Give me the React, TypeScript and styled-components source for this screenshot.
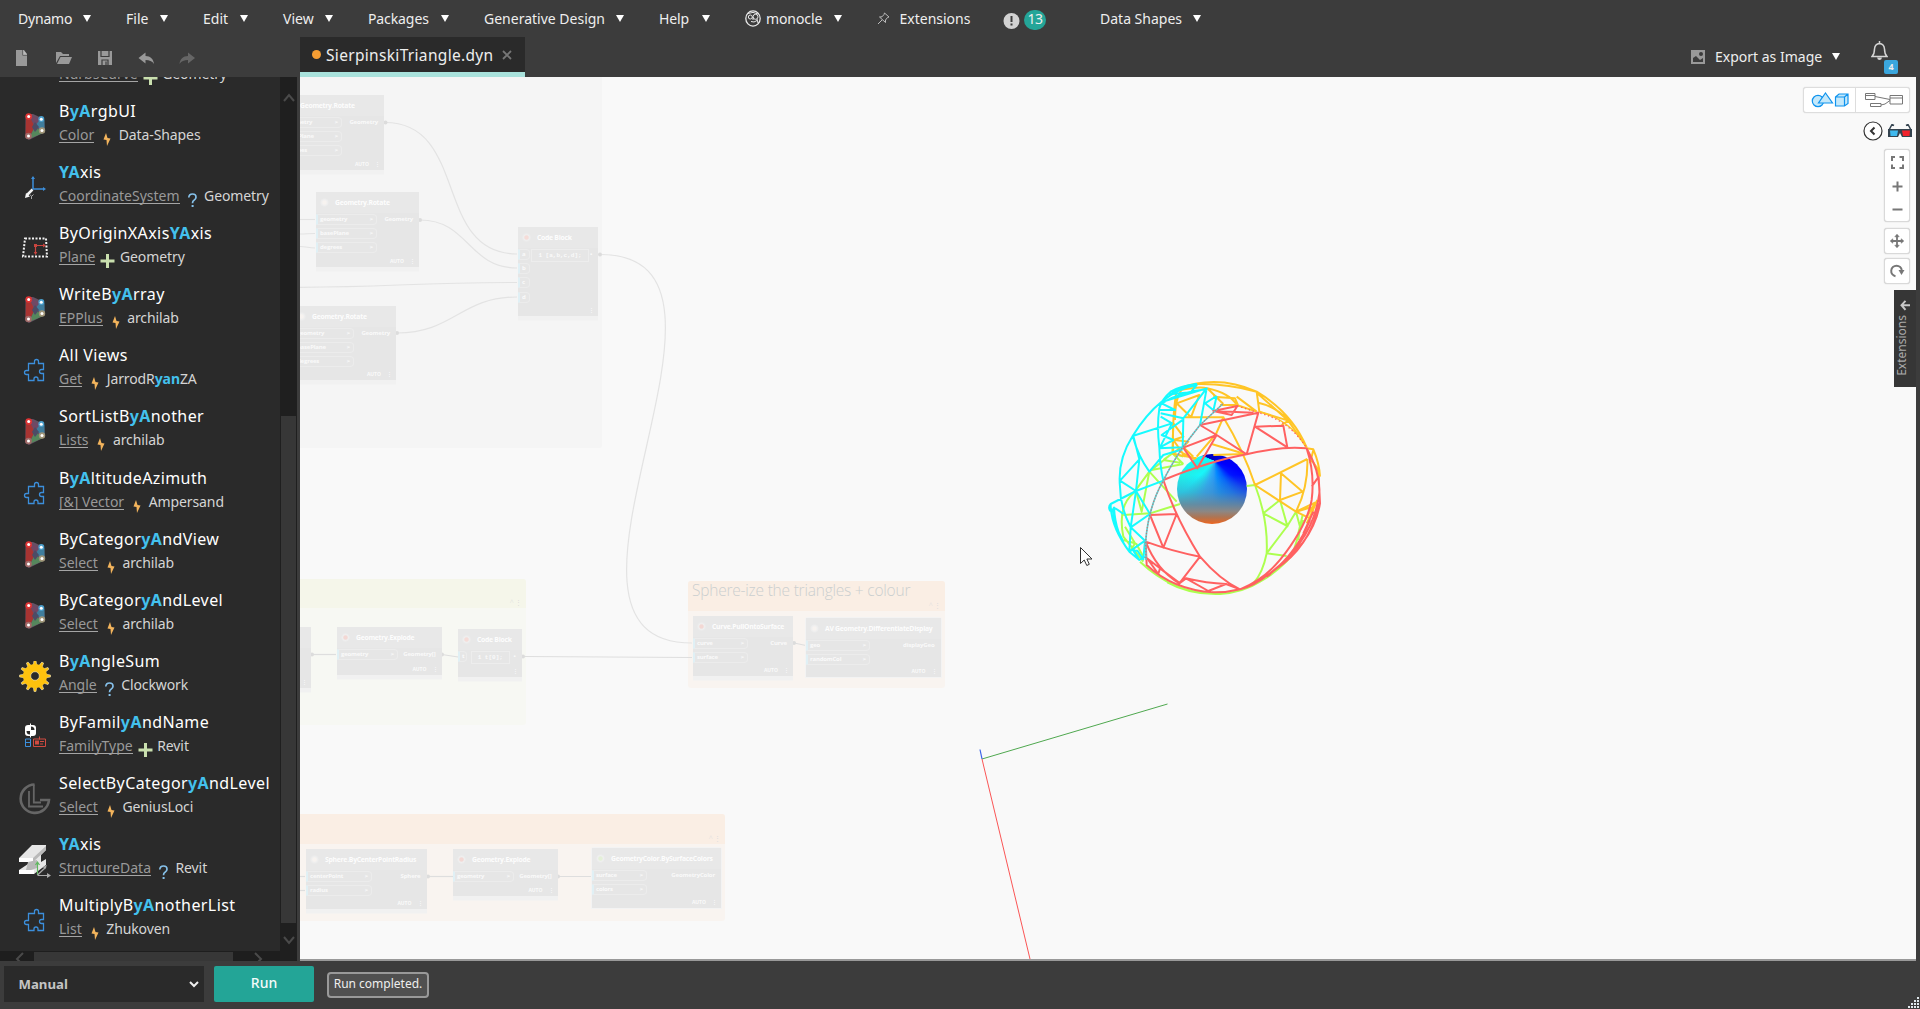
import React from 'react';
import styled, { createGlobalStyle } from 'styled-components';

const Global = createGlobalStyle`
  * { box-sizing: border-box; }
  body { margin: 0; background: #3c3c3c; overflow: hidden; }
  svg { display: block; flex: none; }
`;

const Shell = styled.div`
  width: 1920px;
  height: 1009px;
  display: flex;
  flex-direction: column;
  background: #3c3c3c;
  color: #eee;
  font-family: 'Noto Sans', 'Open Sans', sans-serif;
  overflow: hidden;
`;

/* ---------- header ---------- */
const MenuBar = styled.div`
  display: flex;
  height: 37px;
  padding-left: 18px;
`;
const MenuItem = styled.div<{ $w: number }>`
  width: ${p => p.$w}px;
  height: 37px;
  display: flex;
  align-items: center;
  font-size: 14px;
  line-height: 37px;
  padding-right: 35.5px;
  white-space: nowrap;
`;
const MenuText = styled.span<{ $ls?: number }>`
  letter-spacing: ${p => p.$ls ?? 0}px;
`;
const Caret = styled.i`
  margin-left: auto;
  border: 4.5px solid transparent;
  border-top: 7px solid #fff;
  border-bottom: 0;
  flex: none;
`;
const IconSlot = styled.span<{ $w: number }>`
  width: ${p => p.$w}px;
  flex: none;
`;
const Warning = styled.svg`
  margin-top: 3px;
`;
const CountBadge = styled.span`
  width: 22px;
  height: 20px;
  margin: 2px 0 0 4px;
  border-radius: 11px;
  background: #24a598;
  font-size: 14px;
  line-height: 18px;
  text-align: center;
  letter-spacing: -0.6px;
`;
const ToolRow = styled.div`
  display: flex;
  height: 40px;
`;
const Tools = styled.div`
  width: 300px;
  padding-left: 13px;
  display: flex;
  align-items: center;
  gap: 21px;
  padding-top: 2px;
`;
const Tab = styled.div`
  width: 225px;
  height: 40px;
  background: #2a2a2a;
  border-bottom: 5px solid #a9e2dc;
  display: flex;
  align-items: center;
  padding-left: 12px;
  font-size: 15.5px;
  white-space: nowrap;
`;
const Dot = styled.i`
  width: 9px;
  height: 9px;
  border-radius: 50%;
  background: #f59d33;
  margin-right: 5px;
`;
const TabName = styled.span`
  width: 176px;
  letter-spacing: 0.32px;
`;
const HeaderRight = styled.div`
  margin-left: auto;
  width: 229px;
  display: flex;
`;
const Export = styled.div`
  width: 180px;
  display: flex;
  align-items: center;
  font-size: 14px;
  padding: 0 31px 1px 0;
`;
const BellWrap = styled.div`
  position: relative;
  padding-top: 4px;
`;
const BellCount = styled.span`
  position: absolute;
  left: 13px;
  top: 23px;
  width: 14px;
  height: 14px;
  border-radius: 2px;
  background: #3aa6dd;
  font: bold 9px/14px 'Noto Sans', sans-serif;
  text-align: center;
`;

/* ---------- sidebar ---------- */
const Main = styled.div`
  display: flex;
  height: 884px;
`;
const Sidebar = styled.div`
  width: 297px;
  display: grid;
  grid-template: 874px 10px / 280px 17px;
  background: #1f1f1f;
`;
const List = styled.div`
  background: #2a2a2a;
  overflow: hidden;
`;
const ListInner = styled.div`
  margin-top: -38px;
`;
const VTrack = styled.div`
  display: flex;
  flex-direction: column;
  align-items: center;
  padding-top: 15px;
  height: 884px;
`;
const VThumb = styled.div`
  margin: 312px 0 11px;
  width: 15px;
  height: 507px;
  background: #373737;
`;
const HTrack = styled.div`
  display: flex;
  background: #1e1e1e;
  padding: 1px 0 0 15px;
  overflow: hidden;
`;
const HThumb = styled.div`
  margin: 0 20px 0 7px;
  width: 199px;
  background: #373737;
`;
const Gutter = styled.div`
  width: 3px;
`;
const Item = styled.div`
  height: 61.08px;
  display: flex;
`;
const ItemIcon = styled.div`
  width: 59px;
  padding: 11px 0 0 19px;
  flex: none;
`;
const ItemTitle = styled.div`
  height: 23px;
  font-size: 16px;
  line-height: 23px;
  color: #fff;
  white-space: nowrap;
  letter-spacing: 0.4px;
`;
const Hit = styled.b`
  color: #43c1ee;
`;
const SubLine = styled.div`
  height: 22px;
  display: flex;
  font-size: 14px;
  line-height: 22px;
  color: #d5d5d5;
  white-space: nowrap;
  padding-top: 1px;
`;
const Cat = styled.span`
  color: #999;
  height: 19px;
  border-bottom: 1px solid #a5a5a5;
  line-height: 22px;
`;
const Kind = styled.span`
  width: 24.5px;
  padding: 8px 0 0 5px;
`;
const Author = styled.span`
  letter-spacing: -0.1px;
`;

/* ---------- workspace ---------- */
const Canvas = styled.div`
  position: relative;
  width: 1616px;
  height: 884px;
  background: #f9f9f9;
  border-bottom: 2px solid #999;
  overflow: hidden;
`;
const Layer = styled.svg`
  position: absolute;
  left: 0;
  top: 0;
`;
const Group = styled.div<{ $x: number; $y: number; $w: number; $h: number; $c: string }>`
  position: absolute;
  left: ${p => p.$x - 300}px;
  top: ${p => p.$y - 77}px;
  width: ${p => p.$w}px;
  height: ${p => p.$h}px;
  background: ${p => p.$c};
  border-radius: 3px;
  overflow: hidden;
`;
const GroupHead = styled.div<{ $c: string; $h: number }>`
  height: ${p => p.$h}px;
  background: ${p => p.$c};
  padding: 0 4px;
  display: flex;
  justify-content: space-between;
  font-family: 'Open Sans', sans-serif;
  font-weight: 300;
  font-size: 15.5px;
  letter-spacing: -0.22px;
  line-height: 19px;
  color: #cbcfcf;
  white-space: nowrap;
`;
const GroupMark = styled.small`
  margin-left: auto;
  align-self: flex-end;
  font-size: 7px;
  line-height: 10px;
  color: #ddd;
`;
const NodeBox = styled.div<{ $x: number; $y: number; $w: number; $h: number; $strip?: boolean }>`
  position: absolute;
  left: ${p => p.$x - 300}px;
  top: ${p => p.$y - 77}px;
  width: ${p => p.$w}px;
  height: ${p => p.$h}px;
  background: #e6e6e6;
  border-radius: 2px 2px 0 0;
  box-shadow: ${p => (p.$strip ? '0 4.5px 0 #f1f1f1' : '0 0 0 1px #f3f3f3')};
  display: flex;
  flex-direction: column;
  color: #fafafa;
  font: bold 6px/11px 'Open Sans', sans-serif;
  white-space: nowrap;
`;
const NodeHead = styled.div`
  height: 21px;
  flex: none;
  display: flex;
  align-items: center;
  gap: 6px;
  padding-left: 4px;
  background: #e8e8e8;
  font-size: 6.8px;
  letter-spacing: -0.25px;
  color: #fdfdfd;
`;
const Glyph = styled.i<{ $c: string }>`
  width: 9px;
  height: 9px;
  border-radius: 50%;
  background: radial-gradient(${p => p.$c} 25%, #efefef 45%, #e8e8e8 75%);
  flex: none;
`;
const Ports = styled.div`
  display: flex;
  justify-content: space-between;
  padding-top: 1px;
`;
const PortCol = styled.div`
  display: flex;
  flex-direction: column;
  gap: 3.2px;
`;
const InPort = styled.div<{ $w: number }>`
  width: ${p => p.$w}px;
  height: 11px;
  border: 1px solid #ececec;
  border-left: 2px solid #e0f0f5;
  border-radius: 0 4px 4px 0;
  padding: 0 3px 0 2px;
  display: flex;
  justify-content: space-between;
  line-height: 9px;
  letter-spacing: -0.2px;
`;
const OutPort = styled.div`
  padding-right: 6px;
  letter-spacing: -0.15px;
`;
const CodeBox = styled.div`
  height: 13px;
  border: 1px solid #ededed;
  padding: 0 6px;
  font: bold 6px/11px 'Liberation Mono', monospace;
`;
const NodeFoot = styled.div`
  margin-top: auto;
  padding-right: 4px;
  display: flex;
  justify-content: flex-end;
  gap: 6px;
  font-size: 5px;
`;
const Ball = styled.div`
  position: absolute;
  left: 877px;
  top: 377px;
  width: 70px;
  height: 70px;
  border-radius: 50%;
  background:
    linear-gradient(to bottom, rgba(110, 130, 150, 0) 30%, rgba(70, 140, 190, 0.5) 55%, rgba(105, 135, 155, 0.9) 72%, #8c8784 82%, #ad7554 90%, #ee661f 100%),
    conic-gradient(from 0deg at 54% 10%, #0000c8 0deg, #0000e0 60deg, #0000ff 110deg, #0014ff 130deg, #0060ff 152deg, #058aff 172deg, #2a9cf5 184deg, #2fb0f5 198deg, #22ddee 214deg, #18f6fa 226deg, #20f0e8 245deg, #10ffff 285deg, #10d8ff 292deg, #0000c0 296deg, #0000c8 360deg);
`;
const Overlay = styled.div`
  position: absolute;
  right: 0;
  top: 10px;
  display: flex;
  flex-direction: column;
  align-items: flex-end;
`;
const Toggle = styled.div`
  display: flex;
  width: 107px;
  height: 26px;
  margin-right: 6px;
  background: #fff;
  border: 1px solid #ddd;
  border-radius: 3px;
  box-shadow: 0 0 1px #ccc;
`;
const Half = styled.div<{ $first?: boolean }>`
  flex: 1;
  border-right: ${p => (p.$first ? '1px solid #ddd' : '0')};
  padding-left: ${p => (p.$first ? 0 : 2)}px;
  display: flex;
  align-items: center;
  justify-content: center;
`;
const GlassesRow = styled.div`
  display: flex;
  align-items: center;
  gap: 5px;
  margin: 8px 4px 8px 0;
`;
const Tile = styled.div<{ $h: number; $mb: number }>`
  width: 26px;
  height: ${p => p.$h}px;
  margin: 0 6px ${p => p.$mb}px 0;
  background: #fff;
  border: 1px solid #d9d9d9;
  border-radius: 3px;
  box-shadow: 0 0 1px #bbb;
  display: flex;
  flex-direction: column;
  align-items: center;
  justify-content: center;
`;
const ExtTab = styled.div`
  width: 22px;
  height: 97px;
  background: #363636;
  display: flex;
  flex-direction: column;
  align-items: center;
  padding: 10px 0 0 0;
`;
const ExtText = styled.span`
  writing-mode: vertical-rl;
  transform: rotate(180deg);
  font-size: 12px;
  line-height: 16px;
  color: #aaa;
  margin: 4px 6px 0 0;
`;

/* ---------- footer ---------- */
const Footer = styled.div`
  height: 48px;
  display: flex;
  padding: 5px 0 0 4px;
  position: relative;
`;
const ModeSelect = styled.div`
  width: 200px;
  height: 36px;
  background: #2a2a2a;
  padding: 0 4px 0 14.5px;
  display: flex;
  align-items: center;
  justify-content: space-between;
  font-weight: bold;
  font-size: 13.2px;
  color: #c4c4c4;
`;
const RunButton = styled.div`
  margin-left: 10px;
  width: 100px;
  height: 36px;
  border-radius: 2px;
  background: #23a597;
  color: #f2fbfa;
  font-size: 14px;
  font-weight: 500;
  line-height: 34px;
  text-align: center;
`;
const Status = styled.div`
  margin: 6px 0 0 13px;
  width: 102px;
  height: 26px;
  border: 2px solid #999;
  border-radius: 4px;
  background: #505050;
  font-size: 12px;
  line-height: 20px;
  text-align: center;
  white-space: nowrap;
`;
const Grip = styled.svg`
  position: absolute;
  right: 1px;
  bottom: 1px;
`;

/* ---------- icons ---------- */
const CrystalIcon = () => (
  <svg width="32" height="32" viewBox="0 0 32 32">
    <path d="M9.500 3 L14 3 L25 8 L26 21 L10 29 L6.500 27 L6.500 5Z" fill="#655064" />
    <path d="M7 4 L10 4 L16 16 L9 28 L6.500 26Z" fill="#a83432" />
    <path d="M10 4 L22 9 L16 16Z" fill="#704864" />
    <path d="M22 7 L25.500 9 L25.500 20 L16 15Z" fill="#3f7d9c" />
    <path d="M16 15 L24 22 L10 28Z" fill="#55875c" />
    <path d="M16 11 L20 16 L16 21 L13 16Z" fill="#4c4c66" />
    <circle cx="9.700" cy="5.500" r="3.300" fill="#e03434" /><circle cx="22.300" cy="8" r="3" fill="#4b9fcc" />
    <circle cx="23" cy="19.500" r="3.200" fill="#a09578" /><circle cx="9.500" cy="25" r="3.300" fill="#a06a68" />
    <g fill="#fff"><circle cx="9.700" cy="5.500" r="1.500" /><circle cx="22.300" cy="8.300" r="1.500" /><circle cx="23" cy="19.500" r="1.500" /><circle cx="9.500" cy="25" r="1.500" /></g>
  </svg>
);
const AxisIcon = () => (
  <svg width="32" height="32" viewBox="0 0 32 32" fill="none">
    <path d="M14 5V17H25" stroke="#3c8fdc" strokeWidth="1.500" />
    <path d="M12 7L14 4L16 7ZM24 15L27 17L24 19Z" fill="#3c8fdc" />
    <path d="M13.500 17.500L8 23" stroke="#f4f4f4" strokeWidth="2.500" />
    <path d="M6 26L7 21L11 24.500Z" fill="#f4f4f4" />
    <path d="M11 22.500L12.500 24.500L14.500 22.500M12.500 24.500V27" stroke="#aaa" />
  </svg>
);
const PlaneIcon = () => (
  <svg width="32" height="32" viewBox="0 0 32 32" fill="none">
    <path d="M6 5.500H27L28 23.500H4Z" stroke="#f2f2f2" strokeWidth="2" strokeDasharray="2 1.500" />
    <path d="M16.500 20V12.500H26" stroke="#c8453f" strokeWidth="1.200" />
    <path d="M15 11h3v3h-3zM24 10.500L27 12.500L24 14.500ZM14.700 19h3.600L16.500 22Z" fill="#c8453f" />
  </svg>
);
const PuzzleIcon = () => (
  <svg width="32" height="32" viewBox="0 1 32 32" fill="none" stroke="#3c8fdc" strokeWidth="1.300">
    <path d="M9.500 9.500H15.500V7.500A2 2 0 1 1 19.500 7.500V9.500H24.500V15.500H22.500A2 2 0 1 0 22.500 19.500H24.500V26.500H19V25A2 2 0 1 0 15 25V26.500H9.500V20.500H7.500A2 2 0 1 1 7.500 16.500H9.500Z" />
  </svg>
);
const GearIcon = () => (
  <svg width="32" height="32" viewBox="0 1 32 32">
    <g fill="#fec20e" stroke="#fff3c8" strokeWidth=".5">
      {Array.from({ length: 12 }, (_, i) => (
        <path key={i} d="M14 6L15 .5H17L18 6Z" transform={`rotate(${i * 30} 16 16)`} />
      ))}
    </g>
    <circle cx="16" cy="16" r="12" fill="#fec20e" />
    <circle cx="16" cy="16" r="4.300" fill="#2a2a2a" stroke="#fff0c0" strokeWidth=".6" />
  </svg>
);
const FamilyIcon = () => (
  <svg width="32" height="32" viewBox="0 0 32 32" fill="none">
    <rect x="6" y="3" width="11" height="11" rx="3" fill="#fff" />
    <path d="M12 4.500V8H15.500A3.500 3.500 0 0 0 12 4.500ZM11 9V12.500A3.500 3.500 0 0 1 7.500 9Z" fill="#2a2a2a" />
    <path d="M11.500 1.500V15.500" stroke="#fff" />
    <path d="M6.500 17h5v7.500h-5zM6.500 20.500h5" stroke="#3c8fdc" />
    <path d="M14.500 17h12v7.500h-12zM20.500 14.500v3M21 19.500h4M21 22h3" stroke="#d04a40" />
    <path d="M16 18.500h4v4h-4z" fill="#d04a40" />
  </svg>
);
const GeniusIcon = () => (
  <svg width="32" height="32" viewBox="0 0 32 32" fill="none" stroke="#666" strokeWidth="2.600">
    <path d="M15.500 1.500A14.200 14.200 0 1 0 30 17H21" />
    <path d="M14.800 1.500V19.500H22M10 8V23.500H24" strokeWidth="1.800" />
  </svg>
);
const BeamIcon = () => (
  <svg width="34" height="36" viewBox="0 0 34 36">
    <path d="M0 14L13 1H27V6L22 11V18L27 15V21L15 30H0V26L9 20V17H0Z" fill="#e6e6e6" />
    <path d="M0 14H14V18H0ZM0 26H15V30H0Z" fill="#fff" />
    <path d="M14 14L27 2V6L14 18ZM9 18L18 16V24L12 26H7Z" fill="#b8b8b8" />
    <path d="M18.500 31V19M16.500 21L18.500 18L20.500 21" stroke="#5fb85f" fill="none" strokeWidth="1.200" />
    <path d="M18.500 31.500H29M18.500 31L27 23" stroke="#aaa" fill="none" strokeWidth="1.200" />
    <path d="M28 29L32 31.500L28 34ZM24 23L28 21L26 25.500Z" fill="#aaa" />
  </svg>
);
const icons: Record<string, () => React.ReactElement> = {
  crystal: CrystalIcon, axis: AxisIcon, plane: PlaneIcon, puzzle: PuzzleIcon,
  gear: GearIcon, family: FamilyIcon, genius: GeniusIcon, beam: BeamIcon,
};

const KindIcon = ({ k }: { k: string }) => (
  <svg width="15" height="15" viewBox="0 0 15 15">
    {k === 'plus' && <path d="M6 0h3v5.500H14.500v3H9V14H6V8.500H.5v-3H6z" fill="#c9dfae" />}
    {k === 'bolt' && <path d="M7 1L4.500 7.500L7.500 8L8 14L11.500 6.500L8.500 6Z" fill="#f3b45c" />}
    {k === 'query' && (
      <g>
        <path d="M3.800 4.500Q4 1 7.500 1T11 4.200Q11 6 9 7.200Q7.500 8 7.500 10.300" fill="none" stroke="#86c1ea" strokeWidth="1.700" />
        <path d="M6.600 12h2v2h-2z" fill="#86c1ea" />
      </g>
    )}
  </svg>
);

/* Text between asterisks is the part that matches the search. */
const Marked = ({ t }: { t: string }) => (
  <>{t.split('*').map((s, i) => (i % 2 ? <Hit key={i}>{s}</Hit> : s))}</>
);

type Row = [icon: string, title: string, cat: string, kind: string, author: string];
const rows: Row[] = [
  ['', '', 'NurbsCurve', 'plus', 'Geometry'],
  ['crystal', 'B*yA*rgbUI', 'Color', 'bolt', 'Data-Shapes'],
  ['axis', '*YA*xis', 'CoordinateSystem', 'query', 'Geometry'],
  ['plane', 'ByOriginXAxis*YA*xis', 'Plane', 'plus', 'Geometry'],
  ['crystal', 'WriteB*yA*rray', 'EPPlus', 'bolt', 'archilab'],
  ['puzzle', 'All Views', 'Get', 'bolt', 'JarrodR*yan*ZA'],
  ['crystal', 'SortListB*yA*nother', 'Lists', 'bolt', 'archilab'],
  ['puzzle', 'B*yA*ltitudeAzimuth', '[&] Vector', 'bolt', 'Ampersand'],
  ['crystal', 'ByCategor*yA*ndView', 'Select', 'bolt', 'archilab'],
  ['crystal', 'ByCategor*yA*ndLevel', 'Select', 'bolt', 'archilab'],
  ['gear', 'B*yA*ngleSum', 'Angle', 'query', 'Clockwork'],
  ['family', 'ByFamil*yA*ndName', 'FamilyType', 'plus', 'Revit'],
  ['genius', 'SelectByCategor*yA*ndLevel', 'Select', 'bolt', 'GeniusLoci'],
  ['beam', '*YA*xis', 'StructureData', 'query', 'Revit'],
  ['puzzle', 'MultiplyB*yA*notherList', 'List', 'bolt', 'Zhukoven'],
];

const Chevron = ({ d, s = '#4a4a4a' }: { d: string; s?: string }) => (
  <svg width="12" height="12" viewBox="0 0 12 12" fill="none" stroke={s} strokeWidth="2"><path d={d} /></svg>
);

/* ---------- graph nodes ---------- */
type NodeProps = {
  x: number; y: number; w: number; h: number; title: string; ins: string[]; out?: string;
  pw?: number; code?: string; auto?: boolean; strip?: boolean; tint?: string;
};
const GraphNode = ({ x, y, w, h, title, ins, out, pw = 61, code, auto = true, strip = true, tint = '#f7f3f0' }: NodeProps) => (
  <NodeBox $x={x} $y={y} $w={w} $h={h} $strip={strip}>
    <NodeHead><Glyph $c={tint} />{title}</NodeHead>
    <Ports>
      <PortCol>
        {ins.map(p => <InPort key={p} $w={pw}>{p}{pw > 20 && <span>&gt;</span>}</InPort>)}
      </PortCol>
      {code && <CodeBox>{code}</CodeBox>}
      <OutPort>{out}</OutPort>
    </Ports>
    <NodeFoot>{auto && <span>AUTO</span>}<span>⋮</span></NodeFoot>
  </NodeBox>
);

const wire = (x1: number, y1: number, x2: number, y2: number) => {
  const o = Math.hypot(x2 - x1, y2 - y1) * 0.45;
  return `M${x1} ${y1}C${x1 + o} ${y1} ${x2 - o} ${y2} ${x2} ${y2}`;
};
const wires: [number, number, number, number][] = [
  [385, 122.5, 517, 254], [420, 220, 517, 268], [280, 287.5, 517, 282.5], [397, 333, 517, 297],
  [600, 254.5, 692, 643], [300, 219.5, 315, 219.5], [300, 234, 315, 233.5], [300, 246.5, 315, 248],
];
const links: [number, number, number, number][] = [
  [312, 654.5, 336, 654.5], [442, 654.5, 458, 657], [523, 656.5, 692, 657.5], [794, 643, 806, 645.5],
  [428, 876.5, 453, 876.5], [558, 876.5, 592, 876.5], [300, 876.5, 305, 876.5], [300, 890.5, 305, 890.5],
];

/* ---------- curved Sierpinski wireframe ---------- */
const cyan = `M350 72Q238 98 158 228Q112 300 120 380Q120 440 152 502M350 72Q300 78 272 95Q245 118 238 145Q230 200 238 262Q240 320 250 362
M272 95L350 75L332 97L270 103L315 85M250 125L380 85L310 175L242 160M380 85L372 130L360 195M382 88Q310 92 245 130L285 150L240 150M410 108L375 130L402 152M410 108L400 152
M158 228L276 190L240 262L280 240L245 225L310 178L308 262L236 265M276 190L242 170M158 228Q175 290 208 335L250 285L308 268M178 298L120 362L168 393L178 298L160 228
M250 362L168 393L92 432Q84 440 90 452L102 448Q95 435 130 462M168 393L210 462L152 502L168 393M152 502L195 542L148 575L152 502M92 432Q92 500 148 575L178 600L195 590M102 440Q105 520 148 575M98 445L108 500L130 545M195 542L190 598L172 572L160 572L178 600`;
const orange = `M290 88Q410 41 530 95Q636 158 680 262M350 72Q440 70 530 95M300 90Q360 78 382 85Q450 100 470 135M290 90Q275 180 280 282L350 295M310 82Q285 110 285 180
M358 105L333 172L290 130ZM315 172L430 172L408 222L350 290M430 172Q490 270 525 375M395 252L495 282L400 285M530 95L538 155L625 182L530 98M535 128Q590 140 625 182L605 195M610 160L680 262M420 135L470 135L530 155M382 85L430 132M470 110L530 155M400 110L465 115L475 138
M280 190L310 230L280 240M310 262L340 290M285 240L325 245L308 262M280 282L300 262M300 275L345 298M280 240L315 290
M525 375L682 297M603 340L600 420L668 395ZM525 375L648 455M682 297Q685 380 648 455L705 428L690 475L648 455L700 440M680 265L700 268Q718 310 720 350M688 295Q715 320 718 350M690 310L700 270M705 428L675 480M700 450L680 490M712 420L690 470`;
const green = `M500 378L525 375Q565 480 560 580Q548 640 520 670M550 460L600 420L622 498ZM560 580L622 498M560 580L620 588M648 455L622 498L625 500M648 455L660 500L655 540M668 465L655 520M670 480L640 575
M180 605Q280 699 400 701M262 667Q330 705 420 702Q490 697 540 665Q620 620 660 550M280 190L277 280L208 335L160 400Q112 440 130 530L190 605M130 465L210 460L300 432M208 335L185 455L168 393M208 335L290 425M215 330L310 312M250 300L300 308M277 280L310 312M250 300L277 280L310 290M135 500L165 550L130 540M165 550L150 575M168 550L190 590`;
const red = `M250 360Q400 300 500 283Q600 258 680 265Q722 340 718 400Q700 540 570 640Q520 680 480 688M680 265Q705 340 695 420Q680 500 600 600Q550 660 480 688M716 350L720 430Q700 550 570 640M716 350L695 380M700 455L670 520M718 430Q690 560 590 625M690 480Q650 580 560 650
M250 360Q285 470 360 590Q420 660 480 688M210 465L290 462L250 563ZM197 545Q280 575 360 590L298 670Q230 630 197 545L200 615Q280 690 400 697Q440 698 480 688M318 655Q380 670 438 672L385 693ZM298 670L318 655M195 590L240 625L235 642L205 600M240 625L300 670M438 672L480 688
M310 263L410 225L352 325ZM410 225L500 283M360 195L535 158L500 283M360 195L410 225M400 153L472 138L455 165ZM525 200L610 197L622 262ZM400 153L520 158`;

export default function App() {
  return (
    <Shell>
      <Global />
      <MenuBar>
        <MenuItem $w={108}><MenuText $ls={-0.2}>Dynamo</MenuText><Caret /></MenuItem>
        <MenuItem $w={77}><MenuText>File</MenuText><Caret /></MenuItem>
        <MenuItem $w={80}><MenuText>Edit</MenuText><Caret /></MenuItem>
        <MenuItem $w={85}><MenuText>View</MenuText><Caret /></MenuItem>
        <MenuItem $w={116}><MenuText $ls={-0.1}>Packages</MenuText><Caret /></MenuItem>
        <MenuItem $w={175}><MenuText>Generative Design</MenuText><Caret /></MenuItem>
        <MenuItem $w={86}><MenuText $ls={-0.1}>Help</MenuText><Caret /></MenuItem>
        <MenuItem $w={132}>
          <IconSlot $w={21}>
            <svg width="16" height="17" viewBox="0 0 16 17" fill="none" stroke="#e8e8e8">
              <ellipse cx="8" cy="8.500" rx="7.200" ry="7.600" strokeWidth="1.300" />
              <circle cx="5.300" cy="7" r="2" /><circle cx="10.500" cy="6.800" r="2.500" /><path d="M3 3.500Q8 1 13 4M6 11.500Q9 13 12 10.500M8 7V10M12 9L13 13" />
            </svg>
          </IconSlot>
          <MenuText $ls={-0.1}>monocle</MenuText><Caret />
        </MenuItem>
        <MenuItem $w={126}>
          <IconSlot $w={22.5}>
            <svg width="13" height="13" viewBox="0 0 13 13" fill="none" stroke="#bbb">
              <path d="M7.500 1L12 5L10.500 5.500L8.500 8L8.500 10.500L2.500 5L5 4.800L7 2.500ZM5 8L1 12" />
            </svg>
          </IconSlot>
          <MenuText>Extensions</MenuText>
        </MenuItem>
        <MenuItem $w={97}>
          <Warning width="17" height="17" viewBox="0 0 17 17"><circle cx="8.500" cy="9" r="8" fill="#d2d2d2" /><path d="M7.500 4h2v6h-2zM7.500 11.500h2v2h-2z" fill="#3c3c3c" /></Warning>
          <CountBadge>13</CountBadge>
        </MenuItem>
        <MenuItem $w={136}><MenuText>Data Shapes</MenuText><Caret /></MenuItem>
      </MenuBar>
      <ToolRow>
        <Tools>
          <svg width="20" height="20" viewBox="0 0 20 20"><path d="M3 2h7v5h4v-1l-3-4h-1zM3 2h6.500v5.500H14V18H3z" fill="#999" /><path d="M10.500 2L14 6.500h-3.500z" fill="#bbb" /></svg>
          <svg width="20" height="20" viewBox="0 0 20 20"><path d="M2 15V4h5l2 2h6v2H6z" fill="#999" /><path d="M6.500 9H18l-3 7H3z" fill="#999" /></svg>
          <svg width="20" height="20" viewBox="0 0 20 20"><path d="M3 3h14v14H3z" fill="#999" /><path d="M6 3v5.500h8V3M7 17v-5h6v5M11 13.500V17" fill="none" stroke="#3c3c3c" strokeWidth="1.200" /></svg>
          <svg width="20" height="20" viewBox="-.5 -.5 20 20"><path d="M2 9.500L9 4v3.500c5 0 8 3 8.500 8C15.500 12.500 13 11.500 9 11.500V15z" fill="#999" /></svg>
          <svg width="20" height="20" viewBox="0 -.5 20 20"><path d="M18 9.500L11 4v3.500c-5 0-8 3-8.500 8C4.500 12.500 7 11.500 11 11.500V15z" fill="#666" /></svg>
        </Tools>
        <Tab>
          <Dot /><TabName>SierpinskiTriangle.dyn</TabName>
          <svg width="10" height="10" viewBox="0 0 10 10" stroke="#777" strokeWidth="1.800"><path d="M1 1L9 9M9 1L1 9" /></svg>
        </Tab>
        <HeaderRight>
          <Export>
            <IconSlot $w={24}>
              <svg width="14" height="14" viewBox="0 0 14 14"><path d="M0 0h14v14H0z" fill="#999" /><circle cx="10" cy="4" r="2" fill="#3c3c3c" /><path d="M2 12V8l3-2 4 4 3-2v4z" fill="#3c3c3c" /></svg>
            </IconSlot>
            <MenuText>Export as Image</MenuText><Caret />
          </Export>
          <BellWrap>
            <svg width="17" height="20" viewBox="0 0 17 20" fill="none" stroke="#d5d5d5" strokeWidth="1.500">
              <path d="M1 15.500Q3.500 13 3.500 8Q4 2.800 8.500 2.500Q13 2.800 13.500 8Q13.500 13 16 15.500Z" /><path d="M8.500 0v2.500" /><path d="M6 16.500h5q-.5 2.500-2.500 2.500T6 16.500Z" fill="#d5d5d5" stroke="none" />
            </svg>
            <BellCount>4</BellCount>
          </BellWrap>
        </HeaderRight>
      </ToolRow>
      <Main>
        <Sidebar>
          <List>
            <ListInner>
              {rows.map(([icon, title, cat, kind, author], i) => {
                const Icon = icons[icon];
                return (
                  <Item key={i}>
                    <ItemIcon>{Icon && <Icon />}</ItemIcon>
                    <div>
                      <ItemTitle><Marked t={title} /></ItemTitle>
                      <SubLine>
                        <Cat>{cat}</Cat><Kind><KindIcon k={kind} /></Kind><Author><Marked t={author} /></Author>
                      </SubLine>
                    </div>
                  </Item>
                );
              })}
            </ListInner>
          </List>
          <VTrack>
            <Chevron d="M1 9L6 3L11 9" /><VThumb /><Chevron d="M1 3L6 9L11 3" />
          </VTrack>
          <HTrack><Chevron d="M8 1L2 7L8 13" /><HThumb /><Chevron d="M2 1L8 7L2 13" /></HTrack>
        </Sidebar>
        <Gutter />
        <Canvas>
          <Group $x={290} $y={60} $w={312} $h={388} $c="#f5f5f5" />
          <Group $x={290} $y={579} $w={236} $h={145.5} $c="#f7f8f3"><GroupHead $c="#f5f6ea" $h={28.5}><GroupMark>^ ⋮</GroupMark></GroupHead></Group>
          <Group $x={688} $y={581} $w={257} $h={106.5} $c="#f9f4f0"><GroupHead $c="#faeee4" $h={30}>Sphere-ize the triangles + colour<GroupMark>^ ⋮</GroupMark></GroupHead></Group>
          <Group $x={290} $y={814} $w={435} $h={106.5} $c="#f9f4f0"><GroupHead $c="#faeee4" $h={30}><GroupMark>^ ⋮</GroupMark></GroupHead></Group>
          <Layer width="1616" height="882" viewBox="300 77 1616 882" fill="none">
            <g stroke="#e3e3e3" strokeWidth="1.200">{wires.map((w, i) => <path key={i} d={wire(...w)} />)}</g>
            <g stroke="#dedede" strokeWidth="1.200">{links.map(([a, b, c, d], i) => <path key={i} d={`M${a} ${b}L${c} ${d}`} />)}</g>
            <g fill="#dcdcdc">{[[385.5, 122.5], [420, 220], [397, 333], [600, 254.5], [312, 654.5], [442, 654.5], [523, 656.5], [794, 643], [428, 876.5], [558, 876.5]].map(([x, y]) => <circle key={x} cx={x} cy={y} r="2" />)}</g>
          </Layer>
          <GraphNode x={281} y={95} w={103} h={75} title="Geometry.Rotate" ins={['geometry', 'basePlane', 'degrees']} out="Geometry" />
          <GraphNode x={316} y={192} w={103} h={75} title="Geometry.Rotate" ins={['geometry', 'basePlane', 'degrees']} out="Geometry" />
          <GraphNode x={293} y={305.5} w={103} h={74.5} title="Geometry.Rotate" ins={['geometry', 'basePlane', 'degrees']} out="Geometry" />
          <GraphNode x={518} y={227} w={80} h={89} title="Code Block" ins={['a', 'b', 'c', 'd']} pw={12} code="1 [a,b,c,d];" out="▪" auto={false} tint="#f5dcd8" />
          <GraphNode x={250} y={627} w={61} h={61} title="" ins={[]} out="" auto={false} />
          <GraphNode x={337} y={626.5} w={104.5} h={48.5} title="Geometry.Explode" ins={['geometry']} out="Geometry[]" tint="#f3d8d4" />
          <GraphNode x={458} y={629} w={63.5} h={48} title="Code Block" ins={['t']} pw={9} code="1 t[0];" out="▪" auto={false} tint="#f5dcd8" />
          <GraphNode x={693} y={615.5} w={100} h={60.5} title="Curve.PullOntoSurface" ins={['curve', 'surface']} pw={55} out="Curve" tint="#f3d8d4" />
          <GraphNode x={806} y={618} w={134.5} h={59} title="AV Geometry.DifferentiateDisplay" ins={['geo', 'randomCol']} pw={64} out="displayGeo" strip={false} />
          <GraphNode x={306} y={849} w={120.5} h={60} title="Sphere.ByCenterPointRadius" ins={['centerPoint', 'radius']} pw={66} out="Sphere" />
          <GraphNode x={453} y={849} w={104.5} h={47} title="Geometry.Explode" ins={['geometry']} out="Geometry[]" tint="#f3d8d4" />
          <GraphNode x={592} y={848} w={129} h={60} title="GeometryColor.BySurfaceColors" ins={['surface', 'colors']} pw={55} out="GeometryColor" strip={false} tint="#e4f0d8" />
          <Ball />
          <Layer width="1616" height="882" viewBox="300 77 1616 882" fill="none">
            <path d="M982 759L1167.500 704" stroke="#4fa84f" />
            <path d="M982 759L1030 959" stroke="#fa5555" />
            <path d="M980 749.500L982 759" stroke="#3a62e8" strokeWidth="1.200" />
            <g transform="translate(1080 360) scale(.33333)" strokeWidth="6" strokeLinejoin="round">
              <path d={green} stroke="#adff4f" />
              <path d={orange} stroke="#ffc526" />
              <path d={cyan} stroke="#15fbff" />
              <path d={red} stroke="#ff6161" />
              <path d="M428 132L360 195L308 262Q270 320 250 362Q205 440 197 545L198 600" stroke="#5ed0d4" strokeWidth="5" />
              <path d="M428 132L360 195L308 262Q270 320 250 362Q205 440 197 545L198 600" stroke="#c07a78" strokeWidth="3.500" strokeDasharray="4 5" />
              <path d="M538 155Q630 180 680 262" stroke="#ffc526" strokeWidth="4" />
              <path d="M472 138L535 158Q630 182 680 265" stroke="#ff6161" strokeWidth="4" strokeDasharray="4 8" />
            </g>
            <path d="M1080.500 547.500V563.500L1084.200 560L1086.800 565.500L1089.300 564.300L1086.900 559H1092Z" fill="#fff" stroke="#333" />
          </Layer>
          <Overlay>
            <Toggle>
              <Half $first>
                <svg width="38" height="16" viewBox="0 0 38 16" fill="#c4e8fa" stroke="#0f93ee" strokeWidth="1.200">
                  <circle cx="7" cy="9" r="5.700" /><path d="M14.500 1L21.500 11H7.500Z" /><path d="M24.500 5L28 2H37V11.500L33.500 14H24.500ZM24.500 5H33.500V14M33.500 5L37 2" />
                </svg>
              </Half>
              <Half>
                <svg width="38" height="16" viewBox="0 0 38 16" fill="none" stroke="#777">
                  <path d="M.5 1.500h9.500v6H.5zM.5 3.500H10M5.500 11.500h10.500v3H5.500zM25 3.500h12.500v8.500H25zM25 6H37.500M10 4.500L25 7.500M16 13L20 12L25 8.500" />
                </svg>
              </Half>
            </Toggle>
            <GlassesRow>
              <svg width="20" height="20" viewBox="0 0 20 20" fill="none" stroke="#333"><circle cx="10" cy="10" r="9" fill="#fff" strokeWidth="1.200" /><path d="M11.500 6.500L8 10L11.500 13.500" strokeWidth="2" /></svg>
              <svg width="24" height="14" viewBox="0 0 24 14"><path d="M1 6L4 .5L6 1.500M23 6L20 .5L18 1.500" fill="none" stroke="#34434f" strokeWidth="1.500" /><path d="M0 5h24v8H14l-2-4-2 4H0z" fill="#34434f" /><path d="M2 6.500h8L9 12H2.500z" fill="#3fb9ee" /><path d="M14 6.500h8L21.500 12H15z" fill="#f2222c" /></svg>
            </GlassesRow>
            <Tile $h={73} $mb={6}>
              <svg width="16" height="64" viewBox="0 0 16 64" fill="none" stroke="#777" strokeWidth="2">
                <path d="M3 7V3H6M10.500 3H14V7M14 10.500V14H10.500M6 14H3V10.500" /><path d="M8.500 27.500V37.500M3.500 32.500H13.500M3.500 55.500H13.500" />
              </svg>
            </Tile>
            <Tile $h={26} $mb={4}>
              <svg width="16" height="16" viewBox="0 0 16 16" fill="#777" stroke="#777"><path d="M8 2V14M2 8H14" strokeWidth="1.800" /><path d="M8 1.200L10.200 3.800H5.800ZM8 14.800L10.200 12.200H5.800ZM1.200 8L3.800 5.800V10.200ZM14.800 8L12.200 5.800V10.200Z" strokeWidth=".6" /></svg>
            </Tile>
            <Tile $h={26} $mb={6}>
              <svg width="16" height="16" viewBox="0 0 16 16"><path d="M6.500 13.200A5.300 5.300 0 1 1 12.800 7.500" fill="none" stroke="#777" strokeWidth="2" /><path d="M9.500 7H15.500L12.500 12Z" fill="#777" /></svg>
            </Tile>
            <ExtTab>
              <svg width="10" height="11" viewBox="0 0 10 11" fill="none" stroke="#c8c8c8" strokeWidth="2"><path d="M5.500 .8L1.500 5.200L5.500 9.800M1.500 5.200H10" /></svg>
              <ExtText>Extensions</ExtText>
            </ExtTab>
          </Overlay>
        </Canvas>
      </Main>
      <Footer>
        <ModeSelect>Manual<Chevron d="M2 4L6 8L10 4" s="#eee" /></ModeSelect>
        <RunButton>Run</RunButton>
        <Status>Run completed.</Status>
        <Grip width="12" height="12" viewBox="0 0 12 12" fill="#dfe8ec">
          {[[10, 1], [7, 4], [10, 4], [4, 7], [7, 7], [10, 7], [1, 10], [4, 10], [7, 10], [10, 10]].map(([x, y]) => <rect key={`${x}-${y}`} x={x} y={y} width="2" height="2" />)}
        </Grip>
      </Footer>
    </Shell>
  );
}
